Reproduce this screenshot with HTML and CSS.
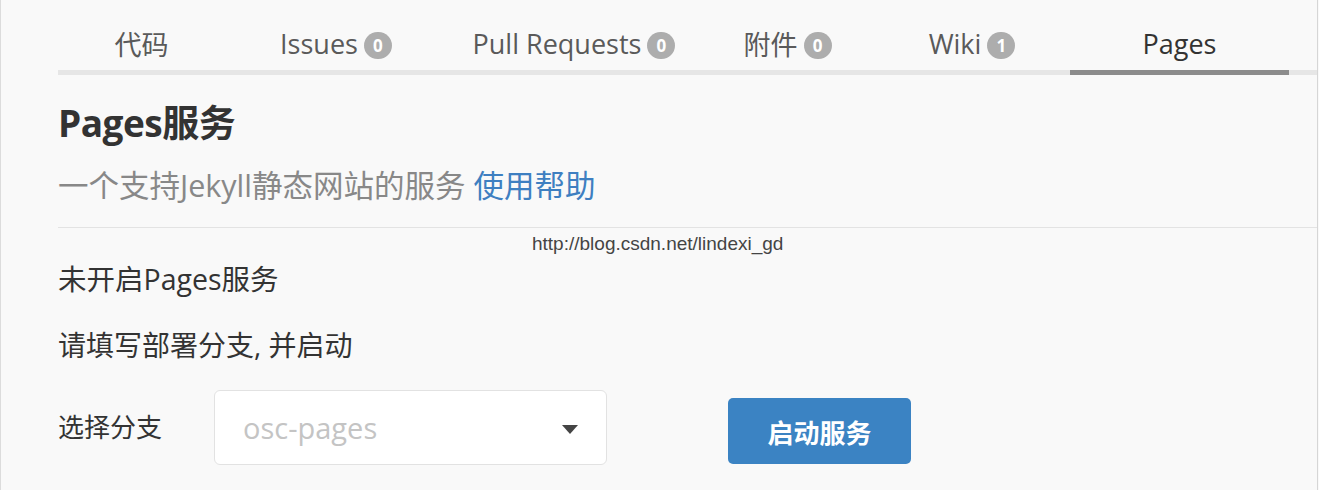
FILE: index.html
```html
<!DOCTYPE html>
<html lang="zh">
<head>
<meta charset="utf-8">
<title>Pages服务</title>
<link rel="stylesheet" href="styles.css">
</head>
<body>
<div class="frame">
  <nav class="tabs">
    <a class="tab t1">代码</a>
    <a class="tab t2">Issues <span class="badge">0</span></a>
    <a class="tab t3">Pull Requests <span class="badge">0</span></a>
    <a class="tab t4">附件 <span class="badge">0</span></a>
    <a class="tab t5">Wiki <span class="badge">1</span></a>
    <a class="tab t6 active">Pages</a>
  </nav>
  <section class="content">
    <h1 class="title">Pages服务</h1>
    <p class="subtitle">一个支持Jekyll静态网站的服务 <a class="help">使用帮助</a></p>
    <div class="divider">
      <span class="watermark">http://blog.csdn.net/lindexi_gd</span>
    </div>
    <p class="status">未开启Pages服务</p>
    <p class="hint">请填写部署分支, 并启动</p>
    <div class="form-row">
      <span class="label">选择分支</span>
      <div class="select">
        <span class="placeholder">osc-pages</span>
        <span class="caret"></span>
      </div>
      <button class="btn">启动服务</button>
    </div>
  </section>
</div>
</body>
</html>
```

FILE: styles.css
```css
html, body {
  margin: 0;
  padding: 0;
  background: #f9f9f9;
}
body {
  font-family: "Open Sans", "Noto Sans CJK SC", sans-serif;
  color: #333;
}
.frame {
  width: 1318px;
  height: 490px;
  border-left: 1px solid #dcdcdc;
  border-right: 1px solid #d6d6d6;
  box-sizing: border-box;
  overflow: hidden;
}
.tabs {
  display: flex;
  margin-left: 57px;
  border-bottom: 5px solid #e6e6e6;
  height: 70px;
  box-sizing: content-box;
}
.tab {
  display: flex;
  align-items: center;
  justify-content: center;
  gap: 6px;
  font-size: 27px;
  color: #5a5a5a;
  padding-top: 16px;
  box-sizing: border-box;
  height: 75px;
  margin-bottom: -5px;
  border-bottom: 5px solid transparent;
  white-space: nowrap;
}
.t1 { width: 167px; }
.t2 { width: 222px; }
.t3 { width: 254px; }
.t4 { width: 173px; }
.t5 { width: 196px; }
.t6 { width: 219px; }
.tab.active {
  color: #333;
  border-bottom-color: #8c8c8c;
}
.badge {
  display: inline-flex;
  align-items: center;
  justify-content: center;
  width: 28px;
  height: 27px;
  border-radius: 14px;
  background: #adadad;
  color: #fff;
  font-size: 17px;
  font-weight: 700;
  margin-top: 4px;
}
.content {
  padding-left: 57px;
}
.title {
  margin: 26px 0 0;
  font-size: 37px;
  line-height: 44px;
  font-weight: 700;
  color: #333;
  letter-spacing: -0.5px;
}
.subtitle {
  margin: 20px 0 0;
  font-size: 30.5px;
  line-height: 40px;
  color: #888;
}
.help {
  color: #3e7fc1;
}
.divider {
  position: relative;
  margin-top: 22px;
  border-top: 1px solid #e3e3e3;
  height: 0;
}
.watermark {
  position: absolute;
  left: 474px;
  top: 5px;
  font-family: "Liberation Sans", sans-serif;
  font-size: 19px;
  color: #444;
  white-space: nowrap;
}
.status {
  margin: 31px 0 0;
  font-size: 28.5px;
  line-height: 40px;
  color: #333;
}
.hint {
  margin: 26px 0 0;
  font-size: 28px;
  line-height: 40px;
  color: #333;
}
.form-row {
  display: flex;
  align-items: flex-end;
  margin-top: 25px;
}
.label {
  width: 156px;
  font-size: 26px;
  line-height: 75px;
  color: #333;
}
.select {
  width: 393px;
  height: 75px;
  box-sizing: border-box;
  border: 1px solid #e2e2e2;
  border-radius: 6px;
  background: #fff;
  display: flex;
  align-items: center;
  justify-content: space-between;
  padding: 0 28px 0 28px;
}
.placeholder {
  font-size: 29px;
  color: #c4c4c4;
}
.caret {
  width: 0;
  height: 0;
  border-left: 8px solid transparent;
  border-right: 8px solid transparent;
  border-top: 9px solid #444;
  margin-top: 4px;
}
.btn {
  margin-left: 121px;
  margin-bottom: 1px;
  width: 183px;
  height: 66px;
  border: none;
  border-radius: 5px;
  background: #3b83c3;
  color: #fff;
  font-family: "Noto Sans CJK SC", sans-serif;
  font-size: 26px;
  font-weight: 700;
}
```
